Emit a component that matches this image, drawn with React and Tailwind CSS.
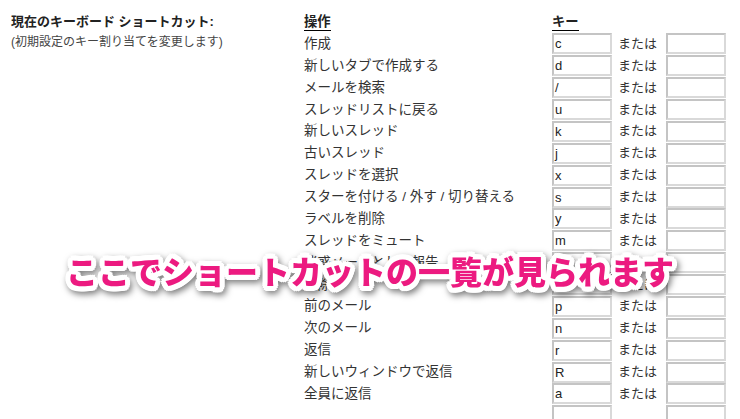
import React from "react";

const rows = [
  ["作成", "c"],
  ["新しいタブで作成する", "d"],
  ["メールを検索", "/"],
  ["スレッドリストに戻る", "u"],
  ["新しいスレッド", "k"],
  ["古いスレッド", "j"],
  ["スレッドを選択", "x"],
  ["スターを付ける / 外す / 切り替える", "s"],
  ["ラベルを削除", "y"],
  ["スレッドをミュート", "m"],
  ["迷惑メールとして報告", "!"],
  ["削除", "#"],
  ["前のメール", "p"],
  ["次のメール", "n"],
  ["返信", "r"],
  ["新しいウィンドウで返信", "R"],
  ["全員に返信", "a"],
  ["", "A"],
];

function Box({ value }) {
  return (
    <div className="h-[21px] w-[60px] border-2 border-[#d9d9d9] border-t-[#c4c4c4] border-l-[#c4c4c4] bg-white pl-[1px] text-[13px] leading-[17px] text-[#222]">
      {value}
    </div>
  );
}

export default function App() {
  return (
    <div className="relative flex h-[419px] w-[740px] overflow-hidden bg-white font-['Liberation_Sans','Noto_Sans_CJK_JP',sans-serif] text-[#222]">
      <div className="w-[304px] shrink-0 pl-[11px] pt-[12px]">
        <div className="text-[13px] font-bold leading-[20px] text-[#222]">
          現在のキーボード ショートカット:
        </div>
        <div className="text-[12px] leading-[20px] text-[#444]">
          (初期設定のキー割り当てを変更します)
        </div>
      </div>
      <div className="pt-[14px]">
        <div className="grid h-[19px] grid-cols-[248px_60px_54px_60px] items-start text-[13.3px] leading-[16px]">
          <div className="flex">
            <span className="block border-b border-black font-bold leading-[16px]">
              操作
            </span>
          </div>
          <div className="flex">
            <span className="block border-b border-black font-bold leading-[16px]">
              キー
            </span>
          </div>
          <div />
          <div />
        </div>
        {rows.map(([label, key], i) => (
          <div
            key={i}
            className="grid h-[21.875px] grid-cols-[248px_60px_54px_60px] items-center"
          >
            <div className="whitespace-nowrap text-[13.5px] leading-[18px] text-[#333]">
              {label}
            </div>
            <Box value={label ? key : ""} />
            <div className="pl-[6px] text-[13px] leading-[18px] text-[#333]">
              {label ? "または" : ""}
            </div>
            <Box value="" />
          </div>
        ))}
      </div>
      <div className="pointer-events-none absolute left-0 right-0 top-[250px] text-center">
        <span className="whitespace-nowrap font-['Noto_Sans_CJK_JP',sans-serif] text-[32px] font-black leading-[40px] text-[#ec1a80] [filter:drop-shadow(2px_3px_3px_rgba(0,0,0,0.5))] [text-shadow:5px_0_0_#fff,-5px_0_0_#fff,0_5px_0_#fff,0_-5px_0_#fff,3.5px_3.5px_0_#fff,-3.5px_3.5px_0_#fff,3.5px_-3.5px_0_#fff,-3.5px_-3.5px_0_#fff,4.6px_2px_0_#fff,-4.6px_2px_0_#fff,4.6px_-2px_0_#fff,-4.6px_-2px_0_#fff,2px_4.6px_0_#fff,-2px_4.6px_0_#fff,2px_-4.6px_0_#fff,-2px_-4.6px_0_#fff]">
          ここでショートカットの一覧が見られます
        </span>
      </div>
    </div>
  );
}
